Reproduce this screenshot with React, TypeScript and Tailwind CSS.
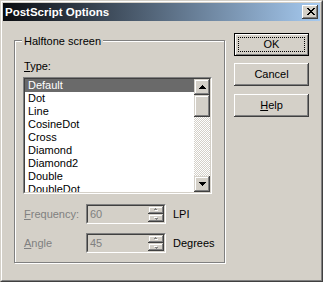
import React from "react";

const raised =
  "shadow-[inset_-1px_-1px_#404040,inset_1px_1px_#fff,inset_-2px_-2px_#808080,inset_2px_2px_#d4d0c8]";
const raisedSb =
  "shadow-[inset_-1px_-1px_#404040,inset_1px_1px_#d4d0c8,inset_-2px_-2px_#808080,inset_2px_2px_#fff]";

function Sunken({ className, children }: { className?: string; children: React.ReactNode }) {
  return (
    <div className={"border border-t-[#808080] border-l-[#808080] border-r-white border-b-white " + (className ?? "")}>
      <div className="w-full h-full border border-t-[#404040] border-l-[#404040] border-r-[#d4d0c8] border-b-[#d4d0c8] flex">
        {children}
      </div>
    </div>
  );
}

function Arrow({ down }: { down?: boolean }) {
  return (
    <svg width="7" height="4" viewBox="0 0 7 4" shapeRendering="crispEdges" className={down ? "rotate-180" : ""}>
      <path d="M3 0h1v1H3zM2 1h3v1H2zM1 2h5v1H1zM0 3h7v1H0z" fill="#000" />
    </svg>
  );
}

function TinyArrow({ down }: { down?: boolean }) {
  return (
    <svg width="6" height="4" viewBox="0 0 6 4" shapeRendering="crispEdges" className={down ? "rotate-180" : ""}>
      <path d="M3 1h1v1H3zM2 2h3v1H2z" fill="#fff" />
      <path d="M2 0h1v1H2zM1 1h3v1H1z" fill="#808080" />
    </svg>
  );
}

function Spin({ value }: { value: string }) {
  return (
    <Sunken className="w-[80px] h-[20px] bg-[#d4d0c8]">
      <div className="flex-1 pl-[2px] leading-[16px] text-[#808080]">{value}</div>
      <div className="w-[16px] flex flex-col">
        <div className={"h-[8px] flex items-center justify-center bg-[#d4d0c8] " + raisedSb}>
          <TinyArrow />
        </div>
        <div className={"h-[8px] flex items-center justify-center bg-[#d4d0c8] " + raisedSb}>
          <TinyArrow down />
        </div>
      </div>
    </Sunken>
  );
}

const items = ["Default", "Dot", "Line", "CosineDot", "Cross", "Diamond", "Diamond2", "Double", "DoubleDot"];

export default function App() {
  return (
    <div className="w-[323px] h-[282px] bg-[#d4d0c8] border border-t-[#d4d0c8] border-l-[#d4d0c8] border-r-[#404040] border-b-[#404040] font-['Liberation_Sans',Arial,sans-serif] text-[11px] text-black select-none">
      <div className="h-full border border-t-white border-l-white border-r-[#808080] border-b-[#808080] p-px flex flex-col">
        {/* Title bar */}
        <div className="h-[18px] flex items-center justify-between bg-[linear-gradient(to_right,#0a0c10,#a6caf0)]">
          <span className="pl-[2px] pb-[1px] text-white font-bold text-[11.5px] leading-[18px]">PostScript Options</span>
          <div className={"w-[16px] h-[14px] mr-[2px] bg-[#d4d0c8] pl-[5px] pt-[3px] " + raised}>
            <svg width="8" height="7" viewBox="0 0 8 7" shapeRendering="crispEdges" className="block">
              <path
                d="M0 0h2v1H0zM6 0h2v1H6zM1 1h2v1H1zM5 1h2v1H5zM2 2h4v1H2zM3 3h2v1H3zM2 4h4v1H2zM1 5h2v1H1zM5 5h2v1H5zM0 6h2v1H0zM6 6h2v1H6z"
                fill="#000"
              />
            </svg>
          </div>
        </div>

        {/* Body */}
        <div className="flex flex-1">
          {/* Group box */}
          <div className="relative ml-[11px] mt-[19px] w-[211px] h-[223px] border border-[#808080] shadow-[inset_1px_1px_#fff,1px_1px_#fff] flex flex-col pl-[8px]">
            <div className="absolute left-[7px] top-[-6px] px-[2px] bg-[#d4d0c8] leading-[13px]">Halftone screen</div>
            <div className="mt-[19px] pl-[1px] leading-[13px]">
              <u>T</u>ype:
            </div>
            <Sunken className="mt-[4px] w-[189px] h-[117px] bg-white">
              <div className="flex-1 overflow-hidden bg-white">
                {items.map((it, i) => (
                  <div
                    key={it}
                    className={
                      "h-[13px] leading-[13px] pl-[3px] whitespace-nowrap " +
                      (i === 0 ? "bg-[#6a6a6a] text-white" : "text-black")
                    }
                  >
                    {it}
                  </div>
                ))}
              </div>
              <div className="w-[16px] flex flex-col">
                <div className={"h-[16px] flex items-center justify-center bg-[#d4d0c8] " + raisedSb}>
                  <Arrow />
                </div>
                <div className={"h-[22px] bg-[#d4d0c8] " + raisedSb}></div>
                <div className="flex-1 bg-[conic-gradient(#fff_25%,#d4d0c8_0_50%,#fff_0_75%,#d4d0c8_0)] bg-[length:2px_2px]"></div>
                <div className={"h-[16px] flex items-center justify-center bg-[#d4d0c8] " + raisedSb}>
                  <Arrow down />
                </div>
              </div>
            </Sunken>

            <div className="mt-[10px] flex items-center h-[20px]">
              <div className="w-[63px] pl-[1px] text-[#808080]">
                <u>F</u>requency:
              </div>
              <Spin value="60" />
              <div className="ml-[7px]">LPI</div>
            </div>
            <div className="mt-[9px] flex items-center h-[20px]">
              <div className="w-[63px] pl-[1px] text-[#808080]">
                <u>A</u>ngle
              </div>
              <Spin value="45" />
              <div className="ml-[7px]">Degrees</div>
            </div>
          </div>

          {/* Buttons */}
          <div className="ml-[9px] mt-[12px] flex flex-col">
            <div className="relative w-[75px] h-[23px] border border-black bg-[#d4d0c8] shadow-[inset_1px_1px_#fff,inset_-1px_-1px_#808080] flex items-center justify-center">
              <div className="absolute left-[3px] top-[3px] right-[3px] bottom-[3px] border border-dotted border-black"></div>
              <span>OK</span>
            </div>
            <div className={"mt-[7px] w-[75px] h-[23px] bg-[#d4d0c8] flex items-center justify-center " + raised}>
              Cancel
            </div>
            <div className={"mt-[8px] w-[75px] h-[23px] bg-[#d4d0c8] flex items-center justify-center " + raised}>
              <span>
                <u>H</u>elp
              </span>
            </div>
          </div>
        </div>
      </div>
    </div>
  );
}
